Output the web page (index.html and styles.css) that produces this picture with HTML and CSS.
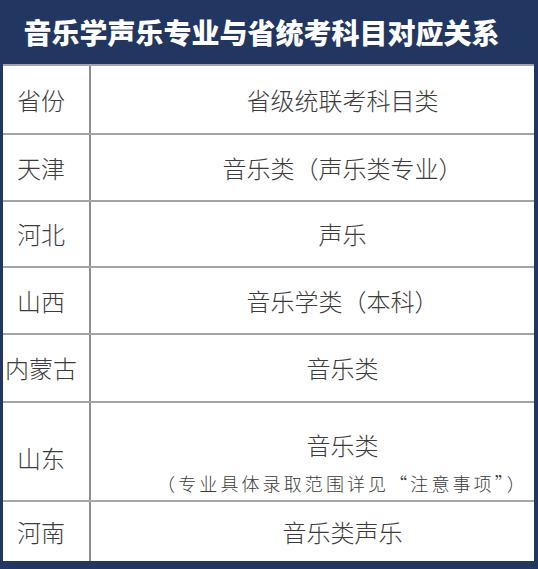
FILE: index.html
```html
<!DOCTYPE html>
<html lang="zh-CN">
<head>
<meta charset="utf-8">
<title>音乐学声乐专业与省统考科目对应关系</title>
<link rel="stylesheet" href="styles.css">
</head>
<body>
<div class="frame">
  <h1 class="title">音乐学声乐专业与省统考科目对应关系</h1>
  <div class="table">
    <div class="row r-head"><div class="c1">省份</div><div class="c2">省级统联考科目类</div></div>
    <div class="row r-1"><div class="c1">天津</div><div class="c2">音乐类（声乐类专业）</div></div>
    <div class="row r-2"><div class="c1">河北</div><div class="c2">声乐</div></div>
    <div class="row r-3"><div class="c1">山西</div><div class="c2">音乐学类（本科）</div></div>
    <div class="row r-4"><div class="c1">内蒙古</div><div class="c2">音乐类</div></div>
    <div class="row r-5"><div class="c1 c1-low">山东</div><div class="c2 c2-multi"><span class="main">音乐类</span><span class="note">（专业具体录取范围详见“注意事项”）</span></div></div>
    <div class="row r-6"><div class="c1">河南</div><div class="c2">音乐类声乐</div></div>
  </div>
</div>
</body>
</html>
```

FILE: styles.css
```css
html, body {
  margin: 0;
  padding: 0;
  background: #213661;
}
body {
  width: 538px;
  height: 569px;
  overflow: hidden;
  font-family: "Noto Sans CJK SC", "Noto Sans", sans-serif;
}
.frame {
  padding: 0 4px 8px 3px;
}
.title {
  margin: 0;
  height: 64px;
  display: flex;
  align-items: center;
  justify-content: center;
  color: #ffffff;
  font-size: 28px;
  font-weight: 900;
  letter-spacing: 0;
  line-height: 1;
  padding-right: 14px;
}
.table {
  background: #ffffff;
  display: flex;
  flex-direction: column;
}
.row {
  display: grid;
  grid-template-columns: 88px 1fr;
  border-top: 2px solid #a3a3a3;
  box-sizing: border-box;
  color: #3c3c3c;
  font-size: 24px;
  font-weight: 300;
}
.r-head { height: 69px; }
.r-1 { height: 67px; }
.r-2 { height: 66px; }
.r-3 { height: 67px; }
.r-4 { height: 68px; }
.r-5 { height: 99px; }
.r-6 { height: 61px; border-top-color: #a8a8a8; }
.c1 {
  border-right: 2px solid #8f8f8f;
  display: flex;
  align-items: center;
  justify-content: center;
  padding-right: 10px;
  line-height: 1;
}
.c1-low { padding-top: 12px; }
.c2 {
  display: flex;
  align-items: center;
  justify-content: center;
  padding-left: 60px;
  line-height: 1;
}
.c2-multi {
  flex-direction: column;
  justify-content: flex-start;
  padding-top: 30px;
  gap: 17px;
}
.note {
  font-size: 18px;
  letter-spacing: 3.1px;
  white-space: nowrap;
}
```
